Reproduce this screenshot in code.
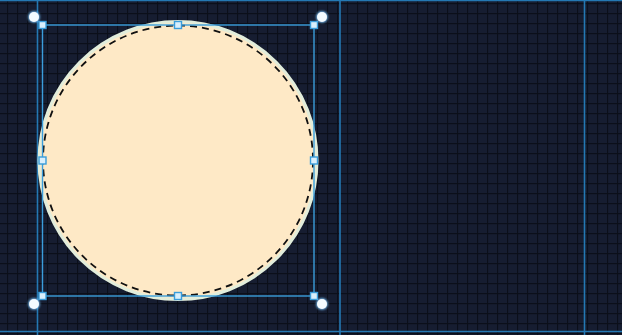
import React from 'react';

const squares = [
  [42.5, 25], [178, 25], [314, 25],
  [42.5, 160.5], [314, 160.5],
  [42.5, 296], [178, 296], [314, 296],
];

const knobs = [[34, 17], [322, 17], [34, 304], [322, 304]];

export default function App() {
  return (
    <div className="relative w-[622px] h-[335px] overflow-hidden bg-[#0d111d]">
      <svg width="622" height="335" className="block">
        <defs>
          <pattern id="grid" width="10" height="10" x="7" y="3" patternUnits="userSpaceOnUse">
            <rect width="10" height="10" fill="#161d31" />
            <path d="M0 0.5H10M0.5 0V10" stroke="#0b0f1a" strokeWidth="1.3" />
          </pattern>
          <filter id="glow" x="-100%" y="-100%" width="300%" height="300%">
            <feGaussianBlur in="SourceAlpha" stdDeviation="1.8" result="b" />
            <feFlood floodColor="#7cc8ff" result="c" />
            <feComposite in="c" in2="b" operator="in" result="g" />
            <feMerge>
              <feMergeNode in="g" />
              <feMergeNode in="g" />
              <feMergeNode in="SourceGraphic" />
            </feMerge>
          </filter>
        </defs>
        <rect width="622" height="335" fill="url(#grid)" />

        {/* guides */}
        <g stroke="#2478b3" strokeWidth="1.6">
          <line x1="37.5" y1="0" x2="37.5" y2="335" />
          <line x1="340" y1="0" x2="340" y2="335" />
          <line x1="584.5" y1="0" x2="584.5" y2="335" />
          <line x1="0" y1="0.5" x2="622" y2="0.5" />
          <line x1="0" y1="331.5" x2="622" y2="331.5" />
        </g>

        {/* shape */}
        <circle cx="178" cy="160.5" r="139" fill="#fee9c6" stroke="#e2eddb" strokeWidth="3" />
        <circle cx="178" cy="160.5" r="135" fill="none" stroke="#111111" strokeWidth="1.8" strokeDasharray="7 5" />

        {/* selection */}
        <rect x="42.5" y="25" width="271.5" height="271" fill="none" stroke="#3a9ddb" strokeWidth="1.4" />
        {squares.map(([x, y], i) => (
          <rect key={i} x={x - 3.5} y={y - 3.5} width="7" height="7" fill="#d9effc" stroke="#3a9ddb" strokeWidth="1.4" />
        ))}
        {knobs.map(([x, y], i) => (
          <circle key={i} cx={x} cy={y} r="5" fill="#f4fbff" filter="url(#glow)" />
        ))}
      </svg>
    </div>
  );
}
